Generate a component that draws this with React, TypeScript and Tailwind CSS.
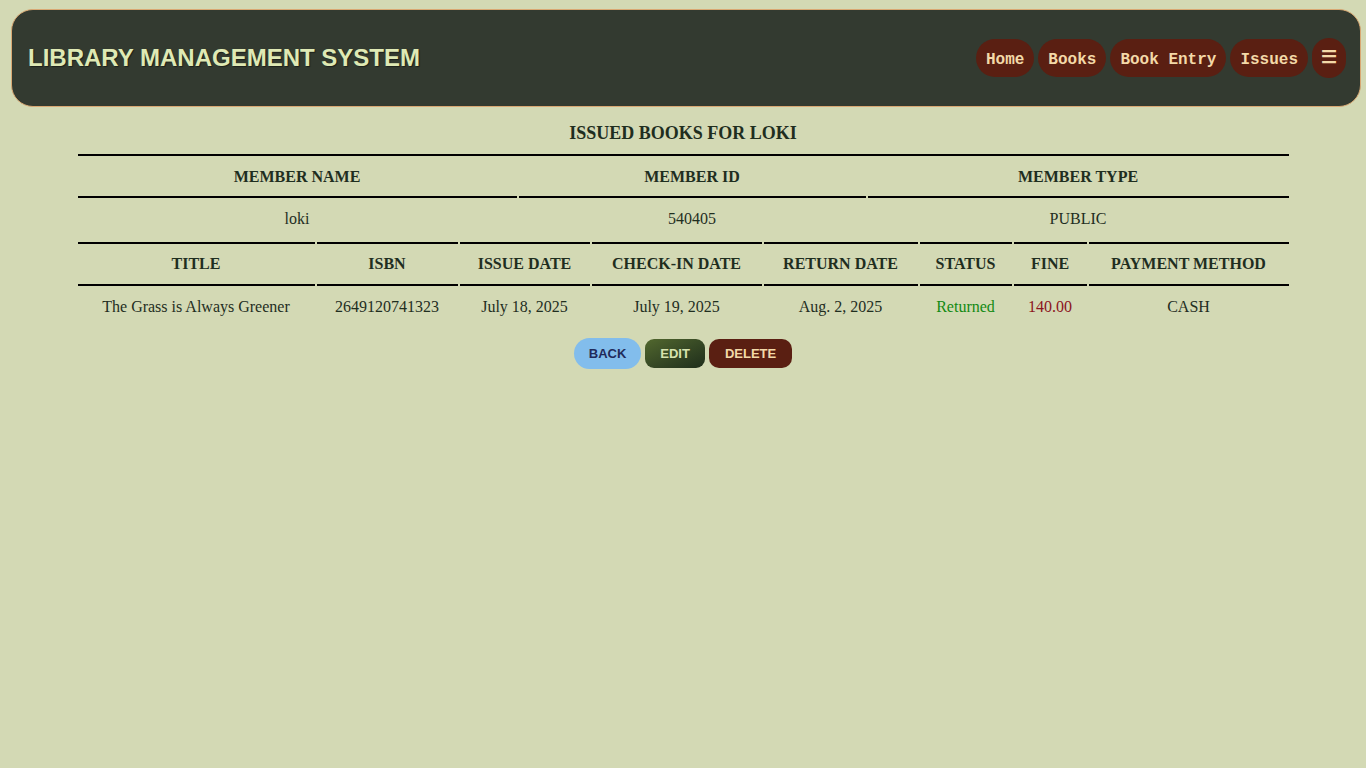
const navLinks = ["Home", "Books", "Book Entry", "Issues"];

const memberCols = [
  { label: "MEMBER NAME", value: "loki" },
  { label: "MEMBER ID", value: "540405" },
  { label: "MEMBER TYPE", value: "PUBLIC" },
];

const issueCols = [
  { label: "TITLE", value: "The Grass is Always Greener", color: "" },
  { label: "ISBN", value: "2649120741323", color: "" },
  { label: "ISSUE DATE", value: "July 18, 2025", color: "" },
  { label: "CHECK-IN DATE", value: "July 19, 2025", color: "" },
  { label: "RETURN DATE", value: "Aug. 2, 2025", color: "" },
  { label: "STATUS", value: "Returned", color: "text-[#128a12]" },
  { label: "FINE", value: "140.00", color: "text-[#8b1420]" },
  { label: "PAYMENT METHOD", value: "CASH", color: "" },
];

export default function App() {
  return (
    <div className="min-h-[768px] w-full bg-[#d3d9b4] pt-[9px] font-['Liberation_Serif',serif] text-[#1f2e1f]">
      <header className="ml-[11px] flex h-[98px] w-[1350px] items-center justify-between rounded-[22px] border border-[#d9a873] bg-[#333a30] pl-[16px] pr-[14px]">
        <h1 className="font-['Liberation_Sans',Arial,sans-serif] text-[24px] font-bold text-[#dfe9b4] [text-shadow:1px_1px_1px_rgba(0,0,0,0.45)]">
          LIBRARY MANAGEMENT SYSTEM
        </h1>
        <nav className="flex items-center gap-[4px] font-['Liberation_Mono','Courier_New',monospace] text-[16px] font-bold text-[#f3d9a8]">
          {navLinks.map((link) => (
            <a
              key={link}
              href="#"
              className="flex h-[38px] items-center rounded-full bg-[#5a1f12] px-[10px] pt-[3px]"
            >
              {link}
            </a>
          ))}
          <button className="flex h-[40px] w-[34px] items-center justify-center rounded-full bg-[#5a1f12] text-[18px] text-[#f3d9a8]">
            ☰
          </button>
        </nav>
      </header>

      <main className="mx-auto mt-[14px] w-[1211px]">
        <h2 className="text-center text-[18px] font-bold leading-[24px]">
          ISSUED BOOKS FOR LOKI
        </h2>

        <div className="mt-[9px] border-t-2 border-black">
          <div className="grid grid-cols-[439px_347px_421px] gap-x-[2px]">
            {memberCols.map((col) => (
              <div
                key={col.label}
                className="border-b-2 border-black pb-[10px] pt-[12px] text-center text-[16px] font-bold leading-[18px]"
              >
                {col.label}
              </div>
            ))}
            {memberCols.map((col) => (
              <div
                key={col.label}
                className="pb-[13px] pt-[11px] text-center text-[16px] leading-[20px]"
              >
                {col.value}
              </div>
            ))}
          </div>

          <div className="grid grid-cols-[237px_141px_130px_170px_154px_92px_73px_200px] gap-x-[2px]">
            {issueCols.map((col) => (
              <div
                key={col.label}
                className="border-y-2 border-black py-[11px] text-center text-[16px] font-bold leading-[18px]"
              >
                {col.label}
              </div>
            ))}
            {issueCols.map((col) => (
              <div
                key={col.label}
                className={`pb-[9px] pt-[11px] text-center text-[16px] leading-[20px] ${col.color}`}
              >
                {col.value}
              </div>
            ))}
          </div>
        </div>

        <div className="mt-[12px] flex justify-center gap-[4px] font-['Liberation_Sans',Arial,sans-serif] text-[13px] font-bold">
          <button className="h-[31px] rounded-full bg-[#82bdec] px-[15px] text-[#1f2a5a]">
            BACK
          </button>
          <button className="mt-[1px] h-[29px] rounded-[9px] bg-gradient-to-br from-[#52682e] to-[#1f2e1b] px-[15px] text-[#d6e3ae]">
            EDIT
          </button>
          <button className="mt-[1px] h-[29px] rounded-[10px] bg-[#5a1f12] px-[16px] text-[#f3d9a8]">
            DELETE
          </button>
        </div>
      </main>
    </div>
  );
}
